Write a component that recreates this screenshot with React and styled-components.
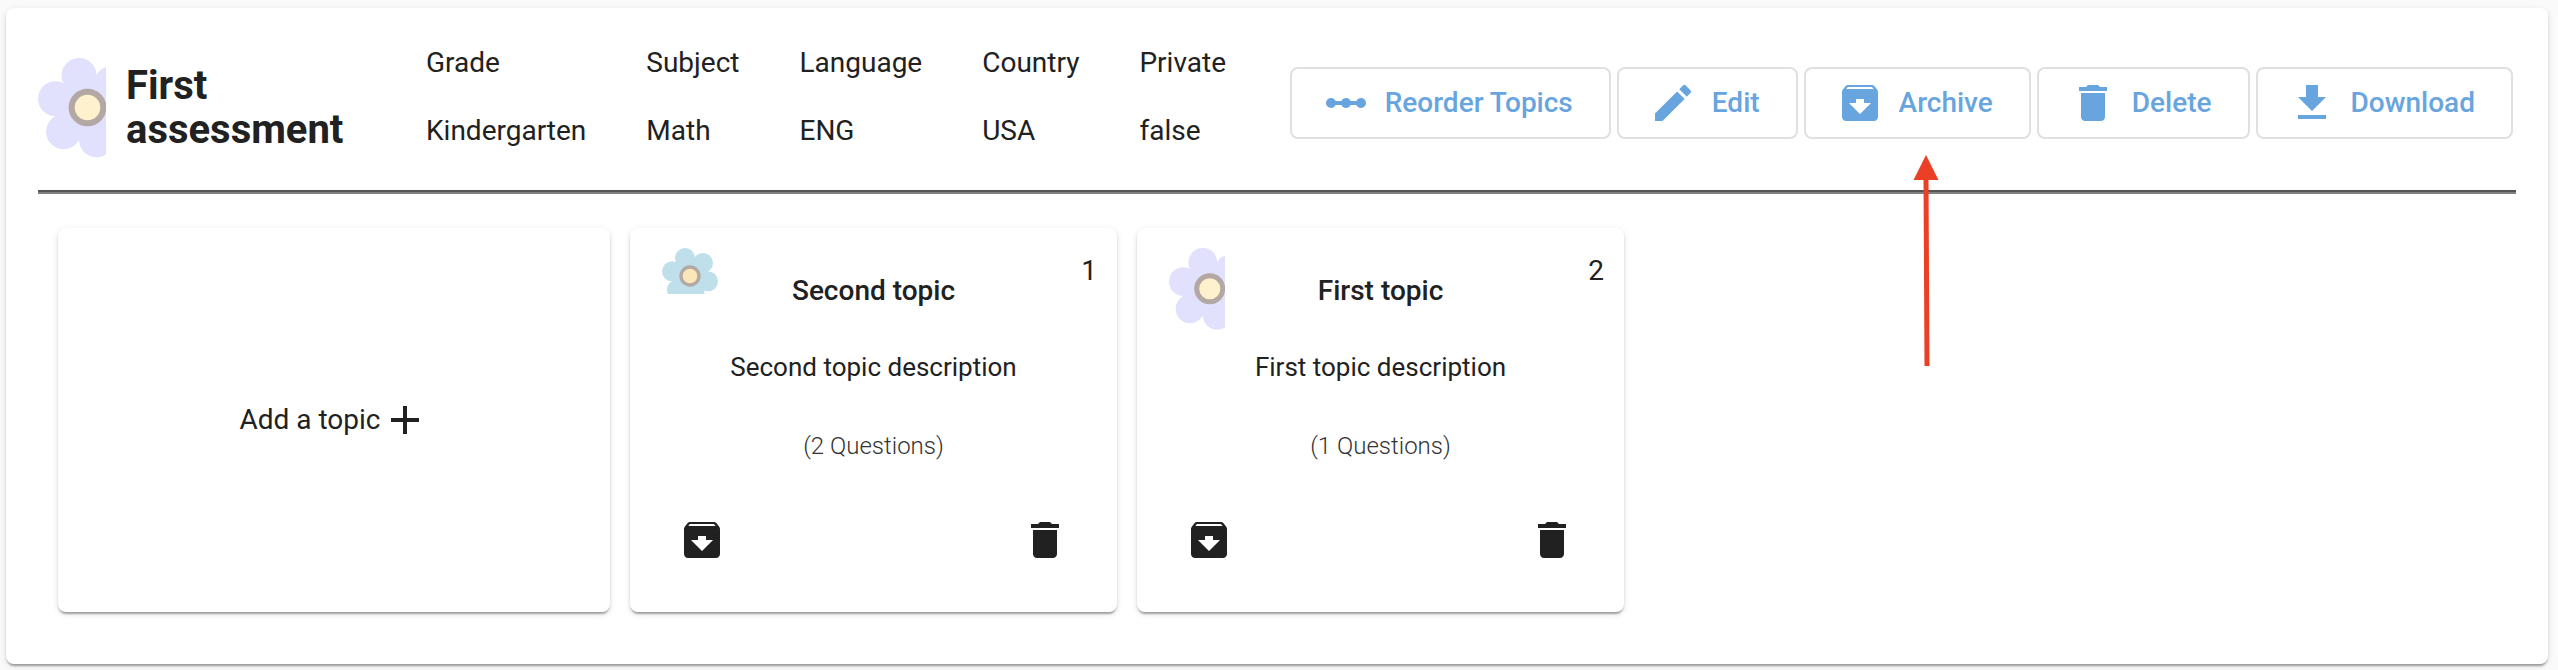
import React from "react";
import styled, { createGlobalStyle } from "styled-components";
import { MdLinearScale, MdEdit, MdArchive, MdDelete, MdAdd, MdDownload } from "react-icons/md";

const GlobalStyle = createGlobalStyle`
  * { box-sizing: border-box; }
  body {
    margin: 0;
    background: #fafafa;
    color: #212121;
    font-family: Roboto, "Liberation Sans", sans-serif;
    font-size: 28px;
    line-height: 32px;
  }
`;

const elevation = `
  box-shadow:
    0 4px 2px -2px rgba(0, 0, 0, 0.2),
    0 2px 2px 0 rgba(0, 0, 0, 0.14),
    0 2px 6px 0 rgba(0, 0, 0, 0.12);
`;

const Panel = styled.main`
  position: relative;
  margin: 8px 10px 6px 6px;
  padding: 32px 32px 52px;
  border-radius: 8px;
  background: #fff;
  ${elevation}
`;

const Header = styled.header`
  display: flex;
  align-items: center;
  justify-content: space-between;
  gap: 40px;
  height: 150px;
  padding: 0 3px 24px 0;
`;

const Summary = styled.div`
  display: flex;
  align-items: center;
`;

const Identity = styled.div`
  display: flex;
  align-items: center;
  gap: 20px;
  width: 388px;
  padding-top: 10px;
`;

const Title = styled.h1`
  margin: 0;
  width: 240px;
  font-size: 40px;
  font-weight: 700;
  line-height: 44px;
`;

const Details = styled.table`
  border-collapse: collapse;
  margin-top: -12px;
  text-align: left;

  th, td {
    height: 68px;
    padding: 0 60px 0 0;
    font-weight: 400;
    white-space: nowrap;
  }
  th:last-child, td:last-child { padding-right: 0; }
`;

const Actions = styled.div`
  display: flex;
  gap: 6px;
`;

const ActionButton = styled.button`
  display: flex;
  align-items: center;
  gap: 15px;
  height: 72px;
  padding: 0 36px 0 30px;
  border: 2px solid #e0e0e0;
  border-radius: 8px;
  background: transparent;
  color: #68a5de;
  font: 500 28px/32px Roboto, "Liberation Sans", sans-serif;
  white-space: nowrap;
  cursor: pointer;

  svg { width: 48px; height: 48px; flex: none; }
`;

const Divider = styled.hr`
  margin: 0;
  border: 0;
  height: 4px;
  border-top: 2px solid #545454;
  border-bottom: 2px solid #808080;
`;

const Topics = styled.section`
  display: flex;
  gap: 20px;
  padding: 34px 20px 0;
`;

const AddCard = styled.button`
  display: flex;
  align-items: center;
  justify-content: center;
  flex: 0 1 552px;
  min-height: 384px;
  padding: 0;
  border: 0;
  border-radius: 8px;
  background: #fff;
  color: inherit;
  font: inherit;
  cursor: pointer;
  ${elevation}

  svg { width: 48px; height: 48px; }
`;

const Card = styled.article`
  display: flex;
  flex-direction: column;
  flex: 0 1 487px;
  min-height: 384px;
  padding: 20px 20px 48px;
  border-radius: 8px;
  background: #fff;
  text-align: center;
  ${elevation}
`;

const CardTop = styled.div`
  display: grid;
  grid-template-columns: 1fr auto 1fr;
  height: 96px;
`;

const CardFlower = styled.div`
  padding-left: 12px;
`;

const CardTitle = styled.h2`
  margin: 0;
  padding-top: 27px;
  font-size: 28px;
  font-weight: 500;
  line-height: 32px;
`;

const Order = styled.span`
  padding-top: 7px;
  text-align: right;
`;

const Description = styled.p`
  margin: 0;
  padding-top: 7px;
  font-size: 26px;
`;

const Count = styled.p`
  margin: 0;
  padding-top: 47px;
  color: #333;
  font-size: 24px;
  font-weight: 300;
`;

const CardActions = styled.div`
  display: flex;
  justify-content: space-between;
  margin-top: auto;
  padding: 0 28px;
`;

const IconButton = styled.button`
  display: flex;
  padding: 0;
  border: 0;
  background: transparent;
  color: inherit;
  cursor: pointer;

  svg { width: 48px; height: 48px; }
`;

const FlowerSvg = styled.svg`
  display: block;
  flex: none;
  width: ${(p) => (p.$large ? 68 : 56)}px;
`;

const Pointer = styled.svg`
  position: absolute;
  top: 147px;
  right: 609px;
  width: 26px;
  height: 212px;
`;

function LilacFlower({ large }) {
  return (
    <FlowerSvg $large={large} viewBox="26 26 202 295" aria-hidden="true">
      <g fill="#e1e0fd">
        <circle cx="148" cy="78" r="52" />
        <circle cx="78" cy="147" r="52" />
        <circle cx="102" cy="245" r="52" />
        <circle cx="200" cy="269" r="52" />
        <circle cx="245" cy="102" r="52" />
        <circle cx="270" cy="199" r="52" />
        <circle cx="173" cy="173" r="80" />
      </g>
      <circle cx="173" cy="173" r="47" fill="#fdf2cd" stroke="#b3a8a4" strokeWidth="18" />
    </FlowerSvg>
  );
}

function BlueFlower() {
  return (
    <FlowerSvg viewBox="0 0 168 138" aria-hidden="true">
      <g fill="#bfdfea">
        <circle cx="69" cy="30" r="30" />
        <circle cx="30" cy="70" r="30" />
        <circle cx="123" cy="45" r="30" />
        <circle cx="138" cy="100" r="30" />
        <circle cx="45" cy="125" r="30" />
        <circle cx="98" cy="138" r="30" />
        <circle cx="84" cy="84" r="46" />
      </g>
      <circle cx="84" cy="84" r="27" fill="#fbe6b7" stroke="#b3a8a4" strokeWidth="10" />
    </FlowerSvg>
  );
}

const details = [
  ["Grade", "Kindergarten"],
  ["Subject", "Math"],
  ["Language", "ENG"],
  ["Country", "USA"],
  ["Private", "false"],
];

const actions = [
  ["Reorder Topics", MdLinearScale],
  ["Edit", MdEdit],
  ["Archive", MdArchive],
  ["Delete", MdDelete],
  ["Download", MdDownload],
];

const topics = [
  { title: "Second topic", order: 1, questions: 2, Flower: BlueFlower },
  { title: "First topic", order: 2, questions: 1, Flower: LilacFlower },
];

export default function App() {
  return (
    <>
      <GlobalStyle />
      <Panel>
        <Header>
          <Summary>
            <Identity>
              <LilacFlower large />
              <Title>First assessment</Title>
            </Identity>
            <Details>
              <thead>
                <tr>{details.map(([name]) => <th key={name} scope="col">{name}</th>)}</tr>
              </thead>
              <tbody>
                <tr>{details.map(([name, value]) => <td key={name}>{value}</td>)}</tr>
              </tbody>
            </Details>
          </Summary>
          <Actions>
            {actions.map(([label, Icon]) => (
              <ActionButton key={label} type="button">
                <Icon />
                {label}
              </ActionButton>
            ))}
          </Actions>
        </Header>
        <Divider />
        <Topics>
          <AddCard type="button">
            Add a topic
            <MdAdd />
          </AddCard>
          {topics.map(({ title, order, questions, Flower }) => (
            <Card key={title}>
              <CardTop>
                <CardFlower><Flower /></CardFlower>
                <CardTitle>{title}</CardTitle>
                <Order>{order}</Order>
              </CardTop>
              <Description>{title} description</Description>
              <Count>({questions} Questions)</Count>
              <CardActions>
                <IconButton type="button" aria-label={`Archive ${title}`}><MdArchive /></IconButton>
                <IconButton type="button" aria-label={`Delete ${title}`}><MdDelete /></IconButton>
              </CardActions>
            </Card>
          ))}
        </Topics>
        <Pointer viewBox="0 0 26 212" aria-hidden="true">
          <path d="M13 0 25.500 25H15.500L16.500 211H11.500L10.500 25H.5Z" fill="#eb4025" />
        </Pointer>
      </Panel>
    </>
  );
}
